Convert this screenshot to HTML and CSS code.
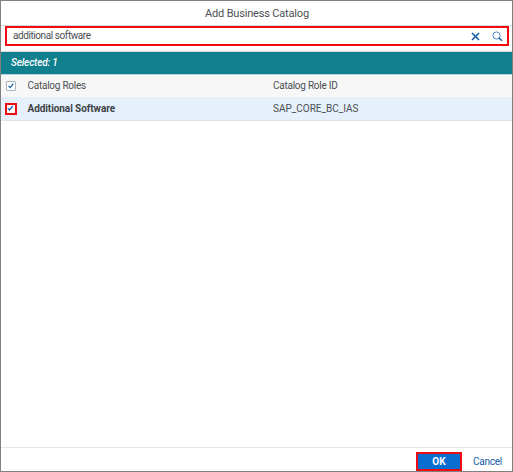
FILE: index.html
```html
<!DOCTYPE html>
<html lang="en">
<head>
<meta charset="utf-8">
<title>Add Business Catalog</title>
<link rel="stylesheet" href="styles.css">
</head>
<body>
<main class="dialog">
  <header class="title"><span>Add Business Catalog</span></header>
  <div class="search-bar">
    <div class="search">
      <span class="query">additional software</span>
      <svg class="clear" width="9" height="9" viewBox="0 0 9 9"><path d="M1 1l7 7M8 1l-7 7"/></svg>
      <svg class="find" width="11" height="11" viewBox="0 0 11 11"><circle cx="4.5" cy="4.5" r="3.6"/><path d="M7 7l3 2.8"/></svg>
    </div>
  </div>
  <div class="info"><span>Selected: 1</span></div>
  <div class="row head">
    <span class="check"><svg width="8" height="8" viewBox="0 0 8 8"><path d="M1.5 3.8l1.7 1.8L6.3 1.7"/></svg></span>
    <span class="name">Catalog Roles</span>
    <span class="head-id">Catalog Role ID</span>
  </div>
  <div class="row item">
    <span class="check marked"><svg width="8" height="8" viewBox="0 0 8 8"><path d="M.8 3.2l1.7 1.8L5.8 1"/></svg></span>
    <span class="name strong">Additional Software</span>
    <span class="role-id">SAP_CORE_BC_IAS</span>
  </div>
  <div class="space"></div>
  <footer class="footer">
    <span class="ok">OK</span>
    <span class="cancel">Cancel</span>
  </footer>
</main>
</body>
</html>
```
FILE: styles.css
```css
* { box-sizing: border-box; }
body { margin: 0; background: #fff; }
.dialog {
  width: 513px; height: 472px;
  display: flex; flex-direction: column;
  border: 1px solid #808080;
  font: 10px/14px Roboto, "Liberation Sans", sans-serif;
  color: #4b4f53;
  white-space: nowrap;
}
.title {
  height: 25px; padding: 6px 0 0 1px;
  border-bottom: 1px solid #d5d9dc;
  text-align: center; font-size: 11px; letter-spacing: -.18px;
}
.search-bar { height: 26px; padding: 0 3px 0 4px; border-bottom: 1px solid #d9d9d9; }
.search {
  height: 20px; padding: 0 4px 0 6px;
  display: flex; align-items: center;
  border: 2px solid #f00a12;
}
.query { flex: 1; letter-spacing: -.42px; }
svg { display: block; fill: none; }
.clear { stroke: #1560a8; stroke-width: 1.6; margin: 1px 12px 0 0; }
.find { stroke: #4a86c0; stroke-width: 1; margin-top: 1px; }
.find path { stroke: #1560a8; stroke-width: 1.5; }
.info {
  height: 23px; padding: 4px 10px;
  background: #10808e; border-bottom: 1px solid #b6d3dc;
  color: #fff; font-style: italic; font-weight: 500; letter-spacing: -.15px;
}
.row {
  display: grid; grid-template-columns: 21.5px 245.5px 1fr;
  align-items: center; padding-left: 5px;
}
.head { height: 22px; background: #f7f7f7; letter-spacing: -.25px; }
.item { height: 24px; background: #e5f0fa; border-bottom: 1px solid #dfe4e8; }
.check {
  width: 10px; height: 10px; margin-top: -1px;
  display: flex; align-items: center; justify-content: center;
  background: #fff; border: 1px solid #a9b4bf; border-radius: 1px;
}
.check path { stroke: #1262ad; stroke-width: 1.2; }
.marked { width: 12px; height: 12px; margin: 0 0 0 -1px; border: 2px solid #f00a12; border-radius: 0; }
.strong { font-weight: 700; color: #3c4247; letter-spacing: -.07px; }
.space { flex: 1; }
.footer {
  height: 24px; padding: 4px 10px 0 0;
  display: flex; justify-content: flex-end; gap: 11px;
  border-top: 1px solid #e5e5e5;
}
.ok {
  width: 46px; height: 19px;
  border: 2px solid #f00a12; background: #0a6ed1;
  color: #fff; font-weight: 700; text-align: center; line-height: 15px;
}
.cancel { color: #1560a8; line-height: 19px; letter-spacing: -.22px; }
```
